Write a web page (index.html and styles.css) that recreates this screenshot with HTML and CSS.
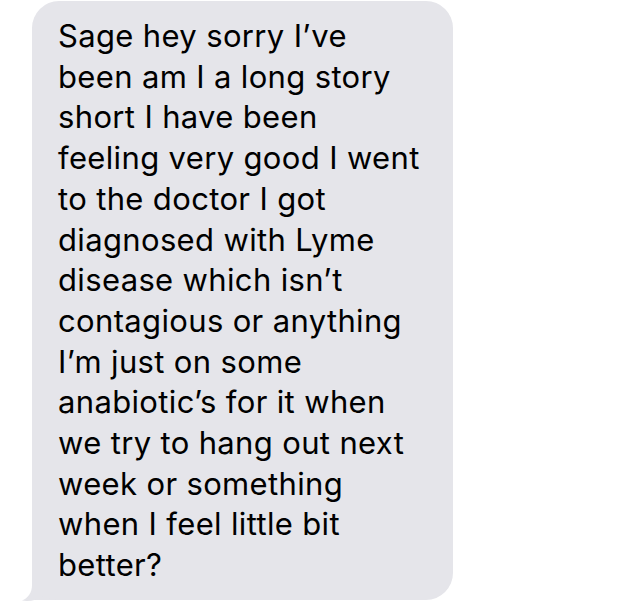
FILE: index.html
```html
<!DOCTYPE html>
<html>
<head>
<meta charset="utf-8">
<link rel="stylesheet" href="styles.css">
</head>
<body>
<div class="thread">
  <div class="bubble">
    <p class="msg"><span class="ln">Sage hey sorry I’ve</span><span class="ln">been am I a long story</span><span class="ln">short I have been</span><span class="ln">feeling very good I went</span><span class="ln">to the doctor I got</span><span class="ln">diagnosed with Lyme</span><span class="ln">disease which isn’t</span><span class="ln">contagious or anything</span><span class="ln">I’m just on some</span><span class="ln">anabiotic’s for it when</span><span class="ln">we try to hang out next</span><span class="ln">week or something</span><span class="ln">when I feel little bit</span><span class="ln">better?</span></p>
    <svg class="tail" width="40" height="41" viewBox="0 0 40 41" aria-hidden="true">
      <path d="M12,0 L12,24 C12,32 8,37 2,39.5 C9,41 17,39 24,35 C29,38 33,39 40,39 L40,0 Z" fill="#e5e5ea"/>
    </svg>
  </div>
</div>
</body>
</html>
```
FILE: styles.css
```css
html, body {
  margin: 0;
  padding: 0;
  background: #ffffff;
}
.thread {
  width: 640px;
  height: 603px;
  overflow: hidden;
  padding-top: 1px;
  box-sizing: border-box;
}
.bubble {
  position: relative;
  margin-left: 32px;
  width: 421px;
  height: 599px;
  box-sizing: border-box;
  background: #e5e5ea;
  border-radius: 27px 27px 27px 0;
  padding: 15px 0 0 26px;
}
.msg {
  margin: 0;
  font-family: "Inter", "Liberation Sans", Arial, sans-serif;
  font-size: 31px;
  line-height: 40.7px;
  letter-spacing: 0.35px;
  color: #000;
}
.ln {
  display: block;
  white-space: nowrap;
}
.tail {
  position: absolute;
  left: -12px;
  bottom: -2px;
}
```
